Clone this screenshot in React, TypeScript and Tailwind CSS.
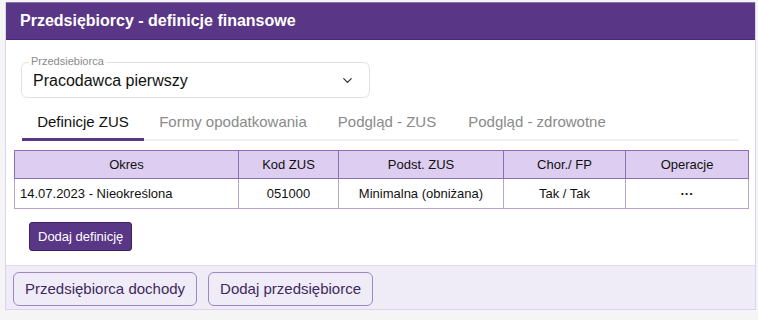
import React, { useState } from 'react';
import { ChevronDown } from 'lucide-react';

const tabs = ['Definicje ZUS', 'Formy opodatkowania', 'Podgląd - ZUS', 'Podgląd - zdrowotne'];

const columns = [
  { label: 'Okres', width: 'w-[224px]' },
  { label: 'Kod ZUS', width: 'w-[100px]' },
  { label: 'Podst. ZUS', width: 'w-[165px]' },
  { label: 'Chor./ FP', width: 'w-[122px]' },
  { label: 'Operacje', width: '' },
];

const App: React.FC = () => {
  const [activeTab, setActiveTab] = useState(0);

  return (
    <div className="min-h-[320px] bg-[#f5f5f5] pl-[5px] pr-[2px] pt-[2px] font-['Liberation_Sans',Arial,sans-serif]">
      <div className="border border-[#ddd3ef] border-t-0 bg-white">
        {/* Header */}
        <div className="flex h-[38px] items-center border-b border-[#472a75] bg-[#5a3786] px-[14px] border-t border-t-[#8c73b3]">
          <h1 className="text-[16px] font-bold text-white">Przedsiębiorcy - definicje finansowe</h1>
        </div>

        <div className="px-[8px] pt-[22px] pb-[14px]">
          {/* Select */}
          <div className="relative ml-[7px] w-[349px]">
            <span className="absolute -top-[8px] left-[8px] bg-white px-[2px] text-[11px] leading-[14px] text-[#8a8a8a]">
              Przedsiebiorca
            </span>
            <div className="flex h-[36px] items-center justify-between rounded-[6px] border border-[#e2e2e2] pl-[11px] pr-[14px]">
              <span className="pt-[2px] text-[16px] text-[#111]">Pracodawca pierwszy</span>
              <ChevronDown className="h-[15px] w-[15px] text-[#333]" strokeWidth={2} />
            </div>
          </div>

          {/* Tabs */}
          <div className="mt-[8px] ml-[8px] mr-[8px] flex border-b-[2px] border-[#f1f1f1]">
            {tabs.map((t, i) => (
              <button
                key={t}
                onClick={() => setActiveTab(i)}
                className={`-mb-[2px] h-[35px] px-[15px] text-[15px] ${
                  i === activeTab
                    ? 'border-b-[3px] border-[#5a3786] text-[#111]'
                    : 'border-b-[3px] border-transparent text-[#8a8a8a]'
                } ${i === 0 ? 'w-[122px]' : i === 1 ? 'w-[178px]' : i === 2 ? 'w-[130px]' : 'w-[170px]'}`}
              >
                {t}
              </button>
            ))}
          </div>

          {/* Table */}
          <table className="mt-[9px] w-[735px] border-collapse text-[13px] text-[#111]">
            <thead>
              <tr className="bg-[#ddcdf0]">
                {columns.map((c) => (
                  <th
                    key={c.label}
                    className={`${c.width} h-[28px] border border-[#8c6fb3] font-normal`}
                  >
                    {c.label}
                  </th>
                ))}
              </tr>
            </thead>
            <tbody>
              <tr>
                <td className="h-[30px] border border-[#b7a4d2] px-[5px] text-left">14.07.2023 - Nieokreślona</td>
                <td className="border border-[#b7a4d2] text-center">051000</td>
                <td className="border border-[#b7a4d2] text-center">Minimalna (obniżana)</td>
                <td className="border border-[#b7a4d2] text-center">Tak / Tak</td>
                <td className="border border-[#b7a4d2] text-center font-bold">···</td>
              </tr>
            </tbody>
          </table>

          <button className="ml-[15px] mt-[13px] h-[29px] rounded-[3px] border border-[#3e2263] bg-[#5a3786] px-[8px] text-[13px] text-white">
            Dodaj definicję
          </button>
        </div>

        {/* Footer */}
        <div className="flex gap-[11px] border-t border-[#e2d9f3] bg-[#efebf7] px-[7px] pt-[6px] pb-[3px]">
          <button className="h-[34px] rounded-[6px] border border-[#9e88c2] px-[11px] text-[15px] text-[#3e2a5e]">
            Przedsiębiorca dochody
          </button>
          <button className="h-[34px] rounded-[6px] border border-[#9e88c2] px-[11px] text-[15px] text-[#3e2a5e]">
            Dodaj przedsiębiorce
          </button>
        </div>
      </div>
    </div>
  );
};

export default App;
